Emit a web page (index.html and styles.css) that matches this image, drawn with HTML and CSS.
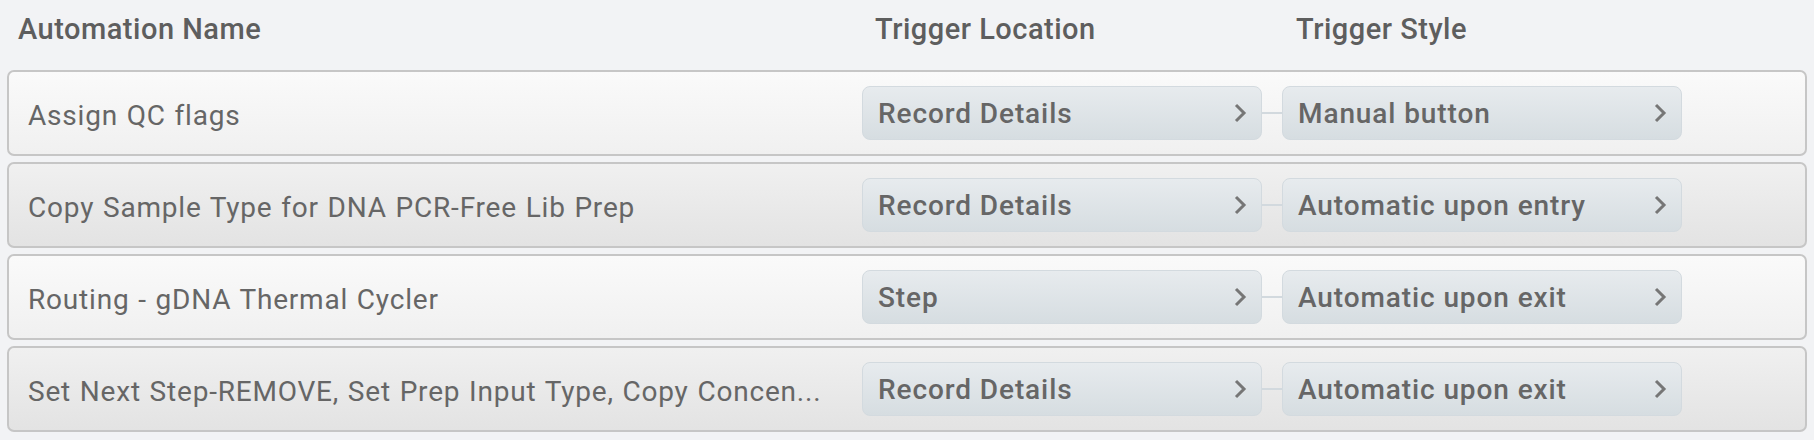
FILE: index.html
```html
<!DOCTYPE html>
<html lang="en">
<head>
<meta charset="utf-8">
<title>Automations</title>
<link rel="stylesheet" href="styles.css">
</head>
<body>
<div class="table">
  <div class="head">
    <div class="th">Automation Name</div>
    <div class="th">Trigger Location</div>
    <div class="th">Trigger Style</div>
  </div>

  <div class="row light">
    <div class="name">Assign QC flags</div>
    <div class="pill"><span>Record Details</span><svg class="chev" viewBox="0 0 14 20"><polyline points="3,2 11,10 3,18"/></svg></div>
    <div class="link"></div>
    <div class="pill"><span>Manual button</span><svg class="chev" viewBox="0 0 14 20"><polyline points="3,2 11,10 3,18"/></svg></div>
  </div>

  <div class="row dark">
    <div class="name">Copy Sample Type for DNA PCR-Free Lib Prep</div>
    <div class="pill"><span>Record Details</span><svg class="chev" viewBox="0 0 14 20"><polyline points="3,2 11,10 3,18"/></svg></div>
    <div class="link"></div>
    <div class="pill"><span>Automatic upon entry</span><svg class="chev" viewBox="0 0 14 20"><polyline points="3,2 11,10 3,18"/></svg></div>
  </div>

  <div class="row light">
    <div class="name">Routing - gDNA Thermal Cycler</div>
    <div class="pill"><span>Step</span><svg class="chev" viewBox="0 0 14 20"><polyline points="3,2 11,10 3,18"/></svg></div>
    <div class="link"></div>
    <div class="pill"><span>Automatic upon exit</span><svg class="chev" viewBox="0 0 14 20"><polyline points="3,2 11,10 3,18"/></svg></div>
  </div>

  <div class="row dark">
    <div class="name">Set Next Step-REMOVE, Set Prep Input Type, Copy Concen...</div>
    <div class="pill"><span>Record Details</span><svg class="chev" viewBox="0 0 14 20"><polyline points="3,2 11,10 3,18"/></svg></div>
    <div class="link"></div>
    <div class="pill"><span>Automatic upon exit</span><svg class="chev" viewBox="0 0 14 20"><polyline points="3,2 11,10 3,18"/></svg></div>
  </div>
</div>
</body>
</html>
```
FILE: styles.css
```css
html, body {
  margin: 0;
  padding: 0;
  background: #f2f3f5;
}

body {
  font-family: Roboto, "Liberation Sans", sans-serif;
  color: #666666;
}

.table {
  padding: 0 7px;
}

.head {
  display: grid;
  grid-template-columns: 857px 421px 1fr;
  height: 70px;
  box-sizing: border-box;
  padding: 14px 0 0 11px;
}

.th {
  font-size: 29px;
  line-height: 30px;
  font-weight: 500;
  color: #5e5e5e;
  letter-spacing: 0.5px;
  white-space: nowrap;
}

.row {
  display: grid;
  grid-template-columns: 834px 400px 20px 400px 1fr;
  align-items: center;
  height: 86px;
  box-sizing: border-box;
  border: 2px solid #c6c6c6;
  border-radius: 7px;
  padding-left: 19px;
  margin-bottom: 6px;
}

.row.light {
  background: linear-gradient(#fafafa, #f0f0f0);
}

.row.dark {
  background: linear-gradient(#f0f0f0, #e3e3e3);
}

.name {
  font-size: 28px;
  line-height: 34px;
  padding-top: 6px;
  letter-spacing: 0.8px;
  word-spacing: 1px;
  color: #666666;
  white-space: nowrap;
}

.pill {
  display: flex;
  align-items: center;
  justify-content: space-between;
  height: 54px;
  box-sizing: border-box;
  border: 1px solid #d3dadf;
  border-radius: 8px;
  background: linear-gradient(#e7ebee, #d6dde1);
  padding: 0 14px 0 15px;
  font-size: 28px;
  font-weight: 500;
  letter-spacing: 0.9px;
  color: #666666;
  white-space: nowrap;
}

.chev {
  width: 14px;
  height: 20px;
  fill: none;
  stroke: #767676;
  stroke-width: 3;
}

.link {
  height: 2px;
  background: #d2d9de;
}
```
